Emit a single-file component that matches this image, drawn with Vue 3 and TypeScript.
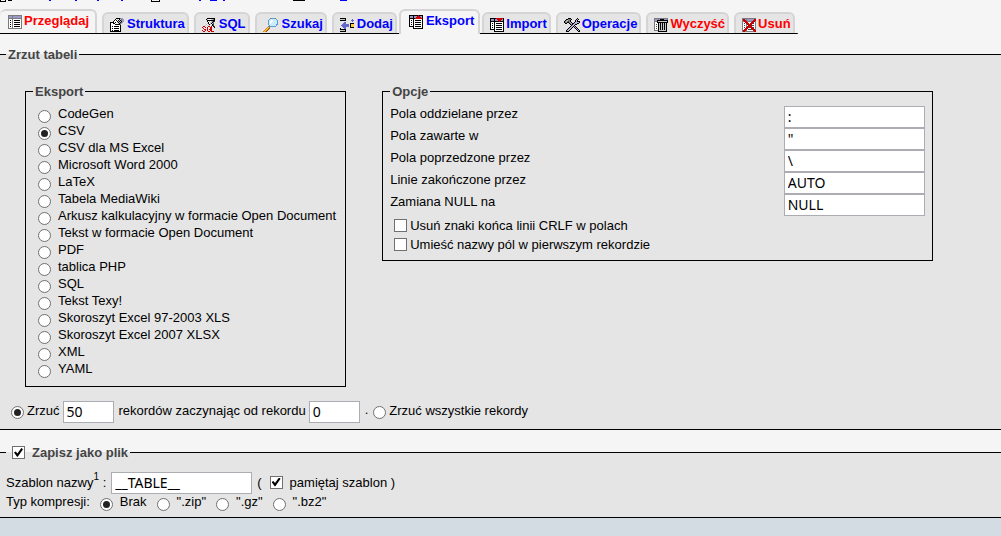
<script setup lang="ts">
import { ref } from 'vue'

type IconName =
  | 'browse' | 'structure' | 'sql' | 'search' | 'insert'
  | 'export' | 'import' | 'tools' | 'empty' | 'drop'

interface Tab {
  label: string
  icon: IconName
  kind?: string
}

const palette: Record<string, string> = {
  K: '#000000', W: '#ffffff', G: '#7b7b7b', S: '#c4c4c4', D: '#444444',
  L: '#9999cc', P: '#6666cc', R: '#cc0000', Y: '#ffcc33', O: '#e08020',
  B: '#5b9bd5', C: '#c9ebfa', N: '#8a5a20', V: '#b4b4dc'
}

// One character per pixel, a dot is transparent.
const icons: Record<IconName, string[]> = {
  browse: [
    'GGGGGGGGGGGGGG', 'GLLLGLLLLLLLLG', 'GLLLGLLLLLLLLG', 'GGGGGGGGGGGGGG',
    'GWWWGWWWWWWWWG', 'GWKWGWKKKKKKWG', 'GWWWGWWWWWWWWG', 'GWKWGWKKKKKKWG',
    'GWWWGWWWWWWWWG', 'GWKWGWKKKKKKWG', 'GWWWGWWWWWWWWG', 'GWKWGWKKKKKKWG',
    'GWWWGWWWWWWWWG', 'GGGGGGGGGGGGGG'
  ],
  structure: [
    '......KKKKGLL.', '.....KWSWKSGLL', '....KWKWKSKGLL', '...KWWWKSKSKLL',
    'KKKKWKWSKSKGL.', 'KWWKKWWWSKGL..', 'KWWWWKKKKKG...', 'KWWWWWWWWWK...',
    'KWKWKKKKKWK...', 'KWWWWWWWWWK...', 'KWKWKKKKKWK...', 'KWWWWWWWWWK...',
    'KWKWKKKKKWK...', 'KKKKKKKKKKK...'
  ],
  sql: [
    '.....KKKKKKKK.', '....KSWWWSSGK.', '.....KKKKKKKK.', '.....KWSWSGKD.',
    '......KWSSKG..', '.....SKWSKSD..', '....SWSKSWKD..', '...SWS.SWSKD..',
    '.RR...RR.R.KD.', 'R..R.R..RR..K.', '.R...R..RR....', '..RR.R.RRR....',
    'R..R.R..RR....', '.RR...RR.RRR..'
  ],
  search: [
    '.......GBBBBG...', '......BCCCCCCB..', '.....BCCWWCCCCB.', '.....BCWWWCCCCB.',
    '.....BCWWCCCCCB.', '.....BCWCCCCCCB.', '.....BCCCCCCCBB.', '......BCCCCCCB..',
    '.....GGBBBBBB...', '....OYG.........', '...OYON.........', '..OYON..........',
    '.OYON...........', 'OYON............'
  ],
  insert: [
    'KKKKKK........', 'SSSSSK......P.', 'KKKKKK.....PPP', '............P.',
    '....PP........', '...PPP....KKKK', '..PPPPPPP.KYYY', '.PPPPPPPP.KYYY',
    '..PPPPPPP.KYYY', '...PPP....KKKK', 'K...PP........', 'KKKKKK........',
    'SSSSSK........', 'KKKKKK........'
  ],
  export: [
    'KKKKKKKKKRKKKK', 'KLLLKLLLRRRLLK', 'KLLLKLLRRRRRLK', 'KKKKKKRRRRRRRK',
    'KWWWKWWWWWWWWK', 'KWKWKWKKKKKKWK', 'KWWWKWWWWWWWWK', 'KWKWKWKKKKKKWK',
    'KWWWKWWWWWWWWK', 'KWKWKWKKKKKKWK', 'KWWWKWWWWWWWWK', 'KKKKKWKKKKKKWK',
    '....KWWWWWWWWK', '....KKKKKKKKKK'
  ],
  import: [
    'KKKKKKRRRRRRRK', 'KLLLKLLRRRRRLK', 'KLLLKLLLRRRLLK', 'KKKKKKKKKRKKKK',
    'KWWWKWWWWWWWWK', 'KWKWKWKKKKKKWK', 'KWWWKWWWWWWWWK', 'KWKWKWKKKKKKWK',
    'KWWWKWWWWWWWWK', 'KWKWKWKKKKKKWK', 'KWWWKWWWWWWWWK', 'KKKKKWKKKKKKWK',
    '....KWWWWWWWWK', '....KKKKKKKKKK'
  ],
  tools: [
    '....KKK......K..', '..KKGGGK....KVK.', '.KGSGGK....KVK..', 'KGSGDGK....KVKKK',
    'KGGKKGSK..KVVVVK', '.KK..KGSKKVVVKK.', '......KGKVVKK...', '.......KVVK.....',
    '......KVVKVK....', '.....KVVK.KVK...', '....KVVK...KVK..', '...KVVK.....KVK.',
    '..KVVK.......KVK', '..KKK.........KK'
  ],
  empty: [
    'GGGGGGGGGGGGGG', 'GLLLGLKKKKLLLG', 'GLLKKKKKKKKKKK', 'GGGKSSSSSSSSSK',
    'GWWKKKKKKKKKKK', 'GWWWKSKSKSKSK.', 'GWDWKSKSKSKSK.', 'GWWWKSKSKSKSK.',
    'GWDWKSKSKSKSK.', 'GWWWKSKSKSKSK.', 'GWDWKSKSKSKSK.', 'GWWWKSKSKSKSK.',
    'GGGGKSSSSSSSK.', '....KKKKKKKKK.'
  ],
  drop: [
    'GGGGGGGGGGGGGG', 'GRRLGLLLLLLLRR', 'GRRRGLLLLLLRRR', 'GGRRRGGGGGRRRG',
    'GWWRRRWWWRRRWG', 'GWDWRRRWRRRDWG', 'GWWWGRRRRRWWWG', 'GWDWGWRRRDDDWG',
    'GWWWGRRRRRWWWG', 'GWDWRRRDRRRDWG', 'GWWRRRWWWRRRWG', 'GWRRRWDDDDRRRG',
    'GRRRGWWWWWWRRR', 'GRRGGGGGGGGGRR'
  ]
}

// Joins equal neighbouring pixels of a row into one strip.
function strips(name: IconName) {
  const out: { x: number; y: number; w: number; fill: string }[] = []
  icons[name].forEach((row, y) => {
    let x = 0
    while (x < row.length) {
      let end = x + 1
      while (end < row.length && row[end] === row[x]) end++
      if (row[x] !== '.') out.push({ x, y, w: end - x, fill: palette[row[x]] })
      x = end
    }
  })
  return out
}

const tabs: Tab[] = [
  { label: 'Przeglądaj', icon: 'browse', kind: 'hovered' },
  { label: 'Struktura', icon: 'structure' },
  { label: 'SQL', icon: 'sql' },
  { label: 'Szukaj', icon: 'search' },
  { label: 'Dodaj', icon: 'insert' },
  { label: 'Eksport', icon: 'export', kind: 'active' },
  { label: 'Import', icon: 'import' },
  { label: 'Operacje', icon: 'tools' },
  { label: 'Wyczyść', icon: 'empty', kind: 'danger' },
  { label: 'Usuń', icon: 'drop', kind: 'danger' }
]

const formats = [
  'CodeGen', 'CSV', 'CSV dla MS Excel', 'Microsoft Word 2000', 'LaTeX', 'Tabela MediaWiki',
  'Arkusz kalkulacyjny w formacie Open Document', 'Tekst w formacie Open Document', 'PDF',
  'tablica PHP', 'SQL', 'Tekst Texy!', 'Skoroszyt Excel 97-2003 XLS',
  'Skoroszyt Excel 2007 XLSX', 'XML', 'YAML'
]
const format = ref('CSV')

const options = ref([
  { id: 'separator', label: 'Pola oddzielane przez', value: ':' },
  { id: 'enclosed', label: 'Pola zawarte w', value: '"' },
  { id: 'escaped', label: 'Pola poprzedzone przez', value: '\\' },
  { id: 'terminated', label: 'Linie zakończone przez', value: 'AUTO' },
  { id: 'null', label: 'Zamiana NULL na', value: 'NULL' }
])
const flags = ref([
  { label: 'Usuń znaki końca linii CRLF w polach', on: false },
  { label: 'Umieść nazwy pól w pierwszym rekordzie', on: false }
])

const range = ref('some')
const limit = ref('50')
const offset = ref('0')
const asFile = ref(true)
const template = ref('__TABLE__')
const remember = ref(true)
const compressions = ['Brak', '".zip"', '".gz"', '".bz2"']
const compression = ref('Brak')
</script>

<template>
  <div class="page">
    <svg class="crumbs" width="360" height="2" viewBox="0 0 360 2" shape-rendering="crispEdges" aria-hidden="true">
      <path d="M0 0h1v1h4v-1h1v2h-6zM8 0h4v1h-4zM151 0h1v1h7v-1h1v2h-9zM293 0h12v1h-12z" fill="#000" />
      <path d="M49 0h2v1h-2zM75 0h2v1h-2zM97 0h2v1h-2zM121 0h2v1h-2zM199 0h2v1h-2zM210 0h7v1h-7zM223 0h2v1h-2zM340 0h7v1h-7z" fill="#00f" />
    </svg>

    <nav class="tabs">
      <a v-for="tab in tabs" :key="tab.label" href="#" class="tab" :class="tab.kind" @click.prevent>
        <svg class="icon" :width="icons[tab.icon][0].length" height="14" :viewBox="`0 0 ${icons[tab.icon][0].length} 14`" shape-rendering="crispEdges" aria-hidden="true">
          <rect v-for="(s, i) in strips(tab.icon)" :key="i" :x="s.x" :y="s.y" :width="s.w" height="1" :fill="s.fill" />
        </svg>
        <span>{{ tab.label }}</span>
      </a>
    </nav>

    <form @submit.prevent>
      <fieldset class="section dump">
        <legend>Zrzut tabeli</legend>
        <div class="columns">
          <fieldset class="box formats">
            <legend>Eksport</legend>
            <label v-for="name in formats" :key="name" class="format">
              <input v-model="format" type="radio" name="format" :value="name">
              <span>{{ name }}</span>
            </label>
          </fieldset>

          <fieldset class="box options">
            <legend>Opcje</legend>
            <div v-for="option in options" :key="option.id" class="option">
              <label :for="option.id">{{ option.label }}</label>
              <input :id="option.id" v-model="option.value" type="text" class="wide">
            </div>
            <div class="flags">
              <label v-for="flag in flags" :key="flag.label" class="flag">
                <input v-model="flag.on" type="checkbox">
                <span>{{ flag.label }}</span>
              </label>
            </div>
          </fieldset>
        </div>

        <div class="range">
          <input id="some" v-model="range" type="radio" name="range" value="some">
          <label for="some">Zrzuć</label>
          <input v-model="limit" type="text" class="short" aria-label="Zrzuć">
          <label for="offset">rekordów zaczynając od rekordu</label>
          <input id="offset" v-model="offset" type="text" class="short">
          <span class="dot">.</span>
          <input id="all" v-model="range" type="radio" name="range" value="all">
          <label for="all">Zrzuć wszystkie rekordy</label>
        </div>
      </fieldset>

      <fieldset class="section file">
        <legend>
          <label class="file-toggle"><input v-model="asFile" type="checkbox">Zapisz jako plik</label>
        </legend>
        <div class="template">
          <label for="template">Szablon nazwy<sup>1</sup> :</label>
          <input id="template" v-model="template" type="text" class="wide">
          <span>(</span>
          <label class="remember"><input v-model="remember" type="checkbox">pamiętaj szablon )</label>
        </div>
        <div class="compression">
          <span>Typ kompresji:</span>
          <label v-for="kind in compressions" :key="kind">
            <input v-model="compression" type="radio" name="compression" :value="kind">
            <span>{{ kind }}</span>
          </label>
        </div>
      </fieldset>
    </form>
    <div class="bottom"></div>
  </div>
</template>

<style>
body {
  margin: 0;
  background: #f5f5f5;
}
</style>

<style scoped>
.page {
  display: flex;
  flex-direction: column;
  min-height: 100vh;
  color: #000;
  font: 13px/17px "Liberation Sans", Arial, sans-serif;
}

.crumbs {
  display: block;
}

.tabs {
  display: flex;
  align-items: flex-end;
  align-self: flex-start;
  gap: 5px;
  padding: 7px 3px 0 0;
  background: linear-gradient(#000, #000) bottom / 100% 1px no-repeat;
}

.tab {
  display: flex;
  box-sizing: border-box;
  height: 21px;
  margin-bottom: 1px;
  padding: 4px 2px 0 6px;
  gap: 3px;
  border: 2px solid #d5d5d5;
  border-bottom: 0;
  border-radius: 6px 6px 0 0;
  background: #e5e5e5;
  color: #00f;
  line-height: 14px;
  font-weight: bold;
  text-decoration: none;
  white-space: nowrap;
}

.tab span {
  margin-top: -1px;
}

.hovered,
.active {
  height: 24px;
  background: #f5f5f5;
}

.hovered {
  border-left: 0;
  padding: 4px 6px 0 8px;
  gap: 2px;
}

.active {
  height: 25px;
  margin: 0 -3px;
  padding: 4px 4px 0 8px;
}

.active ~ .tab {
  gap: 2px;
}

.hovered,
.danger {
  color: #f00;
}

.icon {
  flex: none;
}

.section,
.box {
  min-width: 0;
  margin: 0;
  border: 1px solid #000;
  background: #e5e5e5;
}

.section {
  border-width: 1px 0;
}

legend {
  padding: 0 2px;
  color: #444;
  font-weight: bold;
}

.dump {
  margin-top: 12px;
  padding: 0 6px 6px;
}

.columns {
  display: flex;
  align-items: flex-start;
  gap: 36px;
  margin: 20px 0 14px 19px;
}

.box {
  padding: 5px 7px;
}

.formats {
  padding: 5px 9px 9px 7px;
}

.options {
  box-sizing: border-box;
  flex: none;
  width: 55vw;
}

.format {
  display: flex;
  height: 17px;
  padding-left: 5px;
  gap: 7px;
}

.format input,
.range input[type="radio"],
.compression input {
  margin-top: 5px;
}

input {
  box-sizing: border-box;
  flex: none;
  margin: 0;
}

input[type="radio"],
input[type="checkbox"] {
  display: grid;
  place-content: center;
  width: 13px;
  height: 13px;
  border: 1px solid #707070;
  background: #fff;
  appearance: none;
}

input[type="radio"] {
  border-radius: 50%;
}

input[type="radio"]:checked::before {
  width: 7px;
  height: 7px;
  border-radius: 50%;
  background: #222;
  content: "";
}

input[type="checkbox"]:checked::before {
  width: 9px;
  height: 9px;
  background: #000;
  clip-path: polygon(0 50%, 20% 38%, 38% 60%, 82% 0, 100% 14%, 42% 96%, 34% 96%);
  content: "";
}

input[type="text"] {
  height: 22px;
  padding: 0 3px 1px;
  border: 1px solid #abadb3;
  background: #fff;
  color: #000;
  font: 14px/17px "Noto Sans", sans-serif;
}

.wide {
  width: 141px;
}

.short {
  width: 51px;
}

.option {
  display: flex;
  justify-content: space-between;
}

.option input {
  margin: 1px 0 -1px;
}

.flags {
  padding: 1px 4px;
}

.flag {
  display: flex;
  align-items: center;
  gap: 3px;
  height: 19px;
}

.range {
  display: flex;
  height: 22px;
  padding-left: 5px;
  gap: 3px;
}

.range label {
  margin-top: 1px;
}

.range .short {
  margin-right: 2px;
}

.dot {
  margin-right: 2px;
}

.file {
  margin-top: 14px;
  padding: 0 6px 6px;
}

.file-toggle,
.remember {
  display: flex;
  align-items: center;
  gap: 7px;
}

.file-toggle {
  padding-left: 4px;
}

.template {
  display: flex;
  align-items: center;
  gap: 5px;
  margin-top: 11px;
}

.template label,
.template span {
  padding-bottom: 2px;
}

.remember {
  margin-left: 3px;
}

sup {
  font-size: 10px;
  line-height: 1px;
  vertical-align: 7px;
}

.compression {
  display: flex;
  gap: 10px;
  margin-top: -1px;
}

.compression label {
  display: flex;
  gap: 7px;
}

.bottom {
  flex: 1;
  background: #d3dce3;
}
</style>
